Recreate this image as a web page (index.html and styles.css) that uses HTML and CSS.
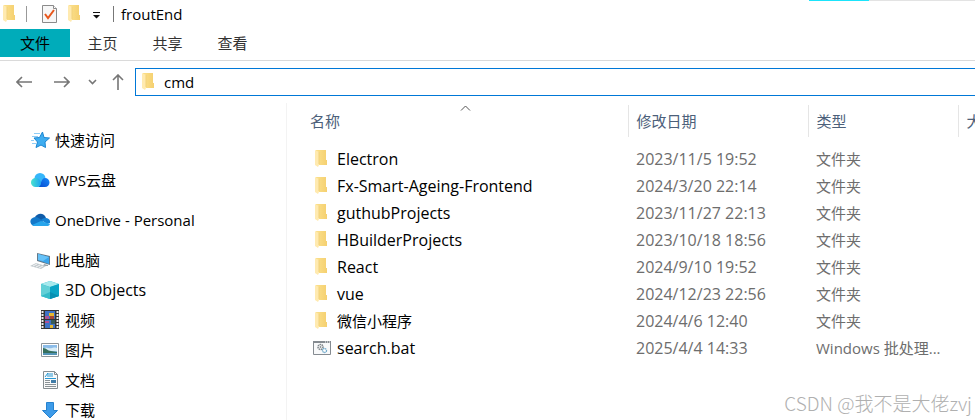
FILE: index.html
```html
<!DOCTYPE html>
<html lang="zh-CN">
<head>
  <meta charset="UTF-8">
  <meta name="viewport" content="width=device-width, initial-scale=1.0">
  <title>froutEnd</title>
  <link rel="stylesheet" href="styles.css">
</head>
<body>
  <!-- Shared icons -->
  <svg class="sprite" aria-hidden="true">
    <linearGradient id="fold" x1="0" x2="1"><stop offset="0" stop-color="#fbe08c"/><stop offset="1" stop-color="#f5d070"/></linearGradient>
    <symbol id="folder" viewBox="0 0 12 18">
      <path d="M1 0h10v10h1v5H1z" fill="url(#fold)"/>
      <path d="M0 0l4 2v13l-1 2-3-2z" fill="#ffeab0"/>
      <path d="M4 2v12" fill="none" stroke="#f1d27c"/>
    </symbol>
    <symbol id="arrow" viewBox="0 0 16 12">
      <path d="M1 6h15M6 1L1 6l5 5" fill="none" stroke="#767676" stroke-width="1.6"/>
    </symbol>
  </svg>

  <div class="window">
    <header class="titlebar">
      <svg class="folder"><use href="#folder"/></svg>
      <span class="divider"></span>
      <button class="tool" aria-label="属性">
        <svg width="16" height="18" viewBox="0 0 16 18">
          <path d="M.5.5h11l3 3v14H.5z" fill="#f7f7f7" stroke="#8b8b8b"/>
          <path d="M11.5.5v3h3" fill="#fff" stroke="#8b8b8b"/>
          <path d="M3 9l3 4 6-8" fill="none" stroke="#e8571c" stroke-width="2"/>
        </svg>
      </button>
      <button class="tool" aria-label="新建文件夹"><svg class="folder"><use href="#folder"/></svg></button>
      <button class="tool menu" aria-label="自定义快速访问工具栏">
        <svg width="7" height="7" viewBox="0 0 7 7"><path d="M0 0h7v1H0zM0 3h7L3.5 6.5z" fill="#111"/></svg>
      </button>
      <span class="divider dark"></span>
      <h1>froutEnd</h1>
      <div class="edge"><span></span></div>
    </header>

    <nav class="tabs">
      <button class="tab active">文件</button>
      <button class="tab">主页</button>
      <button class="tab">共享</button>
      <button class="tab">查看</button>
    </nav>

    <div class="navbar">
      <button class="go" aria-label="后退"><svg width="16" height="12"><use href="#arrow"/></svg></button>
      <button class="go forward" aria-label="前进"><svg width="16" height="12"><use href="#arrow"/></svg></button>
      <button class="go" aria-label="最近浏览的位置">
        <svg width="9" height="6" viewBox="0 0 9 6"><path d="M1 1l3.5 3.5L8 1" fill="none" stroke="#767676" stroke-width="1.6"/></svg>
      </button>
      <button class="go" aria-label="上移">
        <svg width="12" height="16" viewBox="0 0 12 16"><path d="M6 16V1M1 6l5-5 5 5" fill="none" stroke="#767676" stroke-width="1.6"/></svg>
      </button>
      <div class="address">
        <svg class="folder"><use href="#folder"/></svg>
        <input type="text" value="cmd" aria-label="地址">
      </div>
    </div>

    <div class="content">
      <aside class="sidebar">
        <a href="#">
          <svg viewBox="0 0 20 20">
            <path d="M12.500 2l1.500 5.500 5.500.5-4.500 4 .5 5.500-4.500-2.500-5 2.500 1.500-5.500-3.500-4 5.500-.5z" fill="#3fadf0" stroke="#1b86d2"/>
            <path d="M4 3.500h6M2 6.500h6M1 10.500h3M2 13.500h4" stroke="#8fcdf5" fill="none"/>
          </svg>快速访问
        </a>
        <a href="#">
          <svg viewBox="0 0 20 20">
            <defs>
              <linearGradient id="wps" x1="0" x2="1"><stop offset="0" stop-color="#4be3ce"/><stop offset="1" stop-color="#1ba4f2"/></linearGradient>
              <linearGradient id="wps2" x1="0" y1="1" x2="1" y2="0"><stop offset="0" stop-color="#0749cf"/><stop offset="1" stop-color="#168afa"/></linearGradient>
            </defs>
            <circle cx="10" cy="8.500" r="5.500" fill="#36b6fa"/>
            <path d="M8 17c3-1 3-9 7-9a4.500 4.500 0 0 1 0 9z" fill="url(#wps2)"/>
            <path d="M5 17a4.500 4.500 0 1 1 1-9c3 0 4 2 5 4 0 3-1 5-4 5z" fill="url(#wps)"/>
          </svg>WPS云盘
        </a>
        <a href="#">
          <svg viewBox="0 0 20 20">
            <path d="M5 7c2-4 9-5 11 1l-5 5z" fill="#0f5ca9"/>
            <path d="M4 16C-1 14-1 8 5 7c3 0 5 2 8 4l-4 5z" fill="#1478c9"/>
            <path d="M11 10c2-2 4-2 5-2a4 4 0 0 1 4 5l-3 1z" fill="#1683d5"/>
            <path d="M2 15l9-4 9 3c-1 2-2 2-3 2H4z" fill="#27a5ec"/>
          </svg>OneDrive - Personal
        </a>
        <a href="#">
          <svg viewBox="0 0 20 20">
            <path d="M7 3l13 3v9L7 11z" fill="#647989"/>
            <path d="M8 4l11 3v7L8 10z" fill="#38a5ed"/>
            <path d="M8 4l11 3-6 4-5-1z" fill="#67c2f8"/>
            <path d="M14 14l4 1v1l-5 0z" fill="#9aa4aa"/>
            <path d="M0 16l6-3 10 3-5 3z" fill="#c2cace"/>
            <path d="M3 16l4-2M6 17l4-2M9 18l4-2" stroke="#f2f4f5"/>
          </svg>此电脑
        </a>
        <ul>
          <li><a href="#" class="latin">
            <svg viewBox="0 0 20 20">
              <path d="M10 1l9 3v12l-9 3-9-3V4z" fill="#21b6cb"/>
              <path d="M1 4l9-3 9 3-9 3z" fill="#a7e9ed"/>
              <path d="M1 4l9 3v12l-9-3z" fill="#62d0d7"/>
              <path d="M10 7l9-3v12l-9 3z" fill="#0aa4c5"/>
              <path d="M1 16l9-4v7z" fill="#36bcc9"/>
              <path d="M10 12l9 4-9 3z" fill="#078fb2"/>
            </svg>3D Objects
          </a></li>
          <li><a href="#">
            <svg viewBox="0 0 20 20">
              <path d="M1 0h18v19H1z" fill="#333"/>
              <path d="M5 1h10v8H5zM5 10h10v8H5z" fill="#3e73c7"/>
              <path d="M2.500 1v18M17.500 1v18" stroke="#eee" stroke-width="2" stroke-dasharray="2 1"/>
              <path d="M5 6h4v3H5zM5 11h4v2H5z" fill="#ad5296"/>
              <path d="M9 3h5v3H9zM10 15h3v3h-3z" fill="#e6b72f"/>
              <path d="M10 6h4v3h-4z" fill="#a44534"/>
              <path d="M11 10h4v4h-4z" fill="#3a5d58"/>
            </svg>视频
          </a></li>
          <li><a href="#">
            <svg viewBox="0 0 20 20">
              <path d="M1.500 3.500h17v13h-17z" fill="#fff" stroke="#8f969b"/>
              <path d="M3 5h14v10H3z" fill="#8bbce9"/>
              <path d="M3 9c3-3 5 0 9-1s4 0 5 0v3H3z" fill="#d9edf7"/>
              <path d="M3 8c4 0 4 3 8 3l6 1v1H3z" fill="#37705e"/>
              <path d="M3 13h14v2H3z" fill="#5394b7"/>
            </svg>图片
          </a></li>
          <li><a href="#">
            <svg viewBox="0 0 20 20">
              <path d="M3.500 1.500h11l3 3v14h-14z" fill="#fafafa" stroke="#858d91"/>
              <path d="M14.500 1.500v3h3" fill="none" stroke="#858d91"/>
              <path d="M5 7l3-4v4M9 4h4M9 6h4M5 8.500h11" fill="none" stroke="#2697d3"/>
              <path d="M5 10.500h5M5 12.500h5M5 14.500h11M5 16.500h11" stroke="#8a9296"/>
              <path d="M11 10h5v3h-5z" fill="#417da8"/>
            </svg>文档
          </a></li>
          <li><a href="#">
            <svg viewBox="0 0 20 20"><path d="M6.500 2.500h7v8h4L10 18l-7.500-7.500h4z" fill="#3d9be9" stroke="#2682cf"/></svg>下载
          </a></li>
        </ul>
      </aside>

      <main class="files">
        <table>
          <colgroup>
            <col class="col-name">
            <col class="col-date">
            <col class="col-type">
            <col>
          </colgroup>
          <thead>
            <tr>
              <th>名称
                <svg class="sort" width="11" height="6" viewBox="0 0 11 6"><path d="M1 5.500l4.500-4.500L10 5.500" fill="none" stroke="#555"/></svg>
              </th>
              <th>修改日期</th>
              <th>类型</th>
              <th>大小</th>
            </tr>
          </thead>
          <tbody>
            <tr><td class="latin"><svg class="folder"><use href="#folder"/></svg>Electron</td><td class="latin">2023/11/5 19:52</td><td>文件夹</td><td></td></tr>
            <tr><td class="latin"><svg class="folder"><use href="#folder"/></svg>Fx-Smart-Ageing-Frontend</td><td class="latin">2024/3/20 22:14</td><td>文件夹</td><td></td></tr>
            <tr><td class="latin"><svg class="folder"><use href="#folder"/></svg>guthubProjects</td><td class="latin">2023/11/27 22:13</td><td>文件夹</td><td></td></tr>
            <tr><td class="latin"><svg class="folder"><use href="#folder"/></svg>HBuilderProjects</td><td class="latin">2023/10/18 18:56</td><td>文件夹</td><td></td></tr>
            <tr><td class="latin"><svg class="folder"><use href="#folder"/></svg>React</td><td class="latin">2024/9/10 19:52</td><td>文件夹</td><td></td></tr>
            <tr><td class="latin"><svg class="folder"><use href="#folder"/></svg>vue</td><td class="latin">2024/12/23 22:56</td><td>文件夹</td><td></td></tr>
            <tr><td><svg class="folder"><use href="#folder"/></svg>微信小程序</td><td class="latin">2024/4/6 12:40</td><td>文件夹</td><td></td></tr>
            <tr>
              <td class="latin">
                <svg class="bat" viewBox="0 0 18 14">
                  <path d="M.5.500h17v13H.5z" fill="#f8f9fa" stroke="#858b91"/>
                  <path d="M0 0h18v2H0z" fill="#858b91"/>
                  <path d="M12 1h1M14 1h1M16 1h1" stroke="#fff"/>
                  <circle cx="7.500" cy="6" r="2.500" fill="#fff" stroke="#7c8489" stroke-width="1.500" stroke-dasharray="1.500 .6"/>
                  <circle cx="7.500" cy="6" r="1" fill="#8b9296"/>
                  <circle cx="11.500" cy="9.500" r="2" fill="#fff" stroke="#6ba6c8" stroke-width="1.300" stroke-dasharray="1.300 .5"/>
                </svg>search.bat
              </td>
              <td class="latin">2025/4/4 14:33</td><td>Windows 批处理...</td><td></td>
            </tr>
          </tbody>
        </table>
      </main>
    </div>

    <p class="watermark">CSDN @我不是大佬zvj</p>
  </div>
</body>
</html>
```
FILE: styles.css
```css
* {
  box-sizing: border-box;
  margin: 0;
  padding: 0;
}

body {
  background: #fff;
  color: #000;
  font-family: "Open Sans", "Noto Sans CJK SC", sans-serif;
  font-size: 15px;
  line-height: 20px;
}

button,
input {
  font: inherit;
  border: none;
  background: none;
}

svg {
  display: block;
  flex: none;
}

a {
  color: inherit;
  text-decoration: none;
}

.sprite {
  position: absolute;
  width: 0;
  height: 0;
}

.window {
  position: relative;
  display: flex;
  flex-direction: column;
  height: 100vh;
  overflow: hidden;
}

.folder {
  width: 12px;
  height: 18px;
}

/* Latin names and dates run one size up from the Chinese labels */
.latin {
  font-size: 16px;
}

/* Title bar */
.titlebar {
  display: flex;
  align-items: center;
  flex: none;
  height: 29px;
  padding: 0 0 1px 3px;
}

.divider {
  width: 1px;
  height: 16px;
  margin: 0 15px 0 11px;
  background: #999;
}

.divider.dark {
  margin: 0 7px 0 13px;
  background: #777;
}

.tool {
  margin-right: 10px;
}

.tool.menu {
  margin: 3px 0 0 3px;
}

h1 {
  font-size: 15px;
  font-weight: 400;
}

/* Edge of the contextual tab above the ribbon */
.edge {
  align-self: flex-start;
  width: 166px;
  height: 1px;
  margin-left: auto;
  background: #e3e3e3;
}

.edge span {
  display: block;
  width: 60px;
  height: 1px;
  background: #1be4fb;
}

/* Ribbon tabs */
.tabs {
  display: flex;
  flex: none;
  height: 32px;
  padding-bottom: 3px;
  border-bottom: 1px solid #dadada;
}

.tab {
  width: 65px;
  color: #333;
}

.tab.active {
  width: 70px;
  background: #00acba;
  color: #000;
}

/* Navigation and address */
.navbar {
  display: flex;
  align-items: center;
  flex: none;
  height: 42px;
  padding-left: 16px;
}

.go {
  margin-right: 15px;
}

.go:first-child {
  margin-right: 22px;
}

.go.forward {
  margin-right: 18px;
}

.go.forward svg {
  transform: scaleX(-1);
}

.go:nth-of-type(4) {
  margin-right: 11px;
}

.address {
  display: flex;
  align-items: center;
  flex: 1;
  height: 28px;
  padding-left: 6px;
  border: 1px solid #0078d7;
  border-right: none;
}

.address input {
  flex: 1;
  min-width: 0;
  padding-left: 10px;
  outline: none;
}

/* Body */
.content {
  display: flex;
  flex: 1;
  min-height: 0;
}

.sidebar {
  flex: none;
  width: 287px;
  padding: 22px 0 0 30px;
  border-right: 1px solid #f3f3f3;
}

.sidebar a {
  display: flex;
  align-items: center;
  gap: 5px;
  height: 30px;
  margin-bottom: 10px;
}

.sidebar svg {
  width: 20px;
  height: 20px;
}

.sidebar ul {
  margin-top: -10px;
  padding-left: 10px;
  list-style: none;
}

.sidebar li a {
  margin-bottom: 0;
}

.files {
  flex: 1;
  min-width: 0;
  overflow: hidden;
}

table {
  width: 100%;
  table-layout: fixed;
  border-collapse: collapse;
}

.col-name {
  width: 341px;
}

.col-date {
  width: 180px;
}

.col-type {
  width: 150px;
}

th,
td {
  padding-left: 8px;
  text-align: left;
  font-weight: 400;
  white-space: nowrap;
  overflow: hidden;
}

thead::before {
  content: "";
  display: block;
  height: 2px;
}

th {
  position: relative;
  height: 32px;
  color: #4c607a;
  border-right: 1px solid #e5e5e5;
}

th:first-child {
  padding-left: 23px;
}

th:last-child {
  border-right: none;
}

tbody::before {
  content: "";
  display: block;
  height: 8px;
}

td {
  height: 27px;
  color: #6d6d6d;
}

td:first-child {
  display: flex;
  align-items: center;
  padding-left: 28px;
  color: #000;
}

td .folder {
  margin-right: 10px;
}

.bat {
  width: 18px;
  height: 14px;
  margin: 0 6px 0 -2px;
}

.sort {
  position: absolute;
  top: 0;
  left: 173px;
}

.watermark {
  position: absolute;
  right: 3px;
  bottom: 7px;
  color: #b0b0b0;
  font-family: "Noto Sans CJK SC", sans-serif;
  font-size: 19px;
  font-weight: 300;
}
```
